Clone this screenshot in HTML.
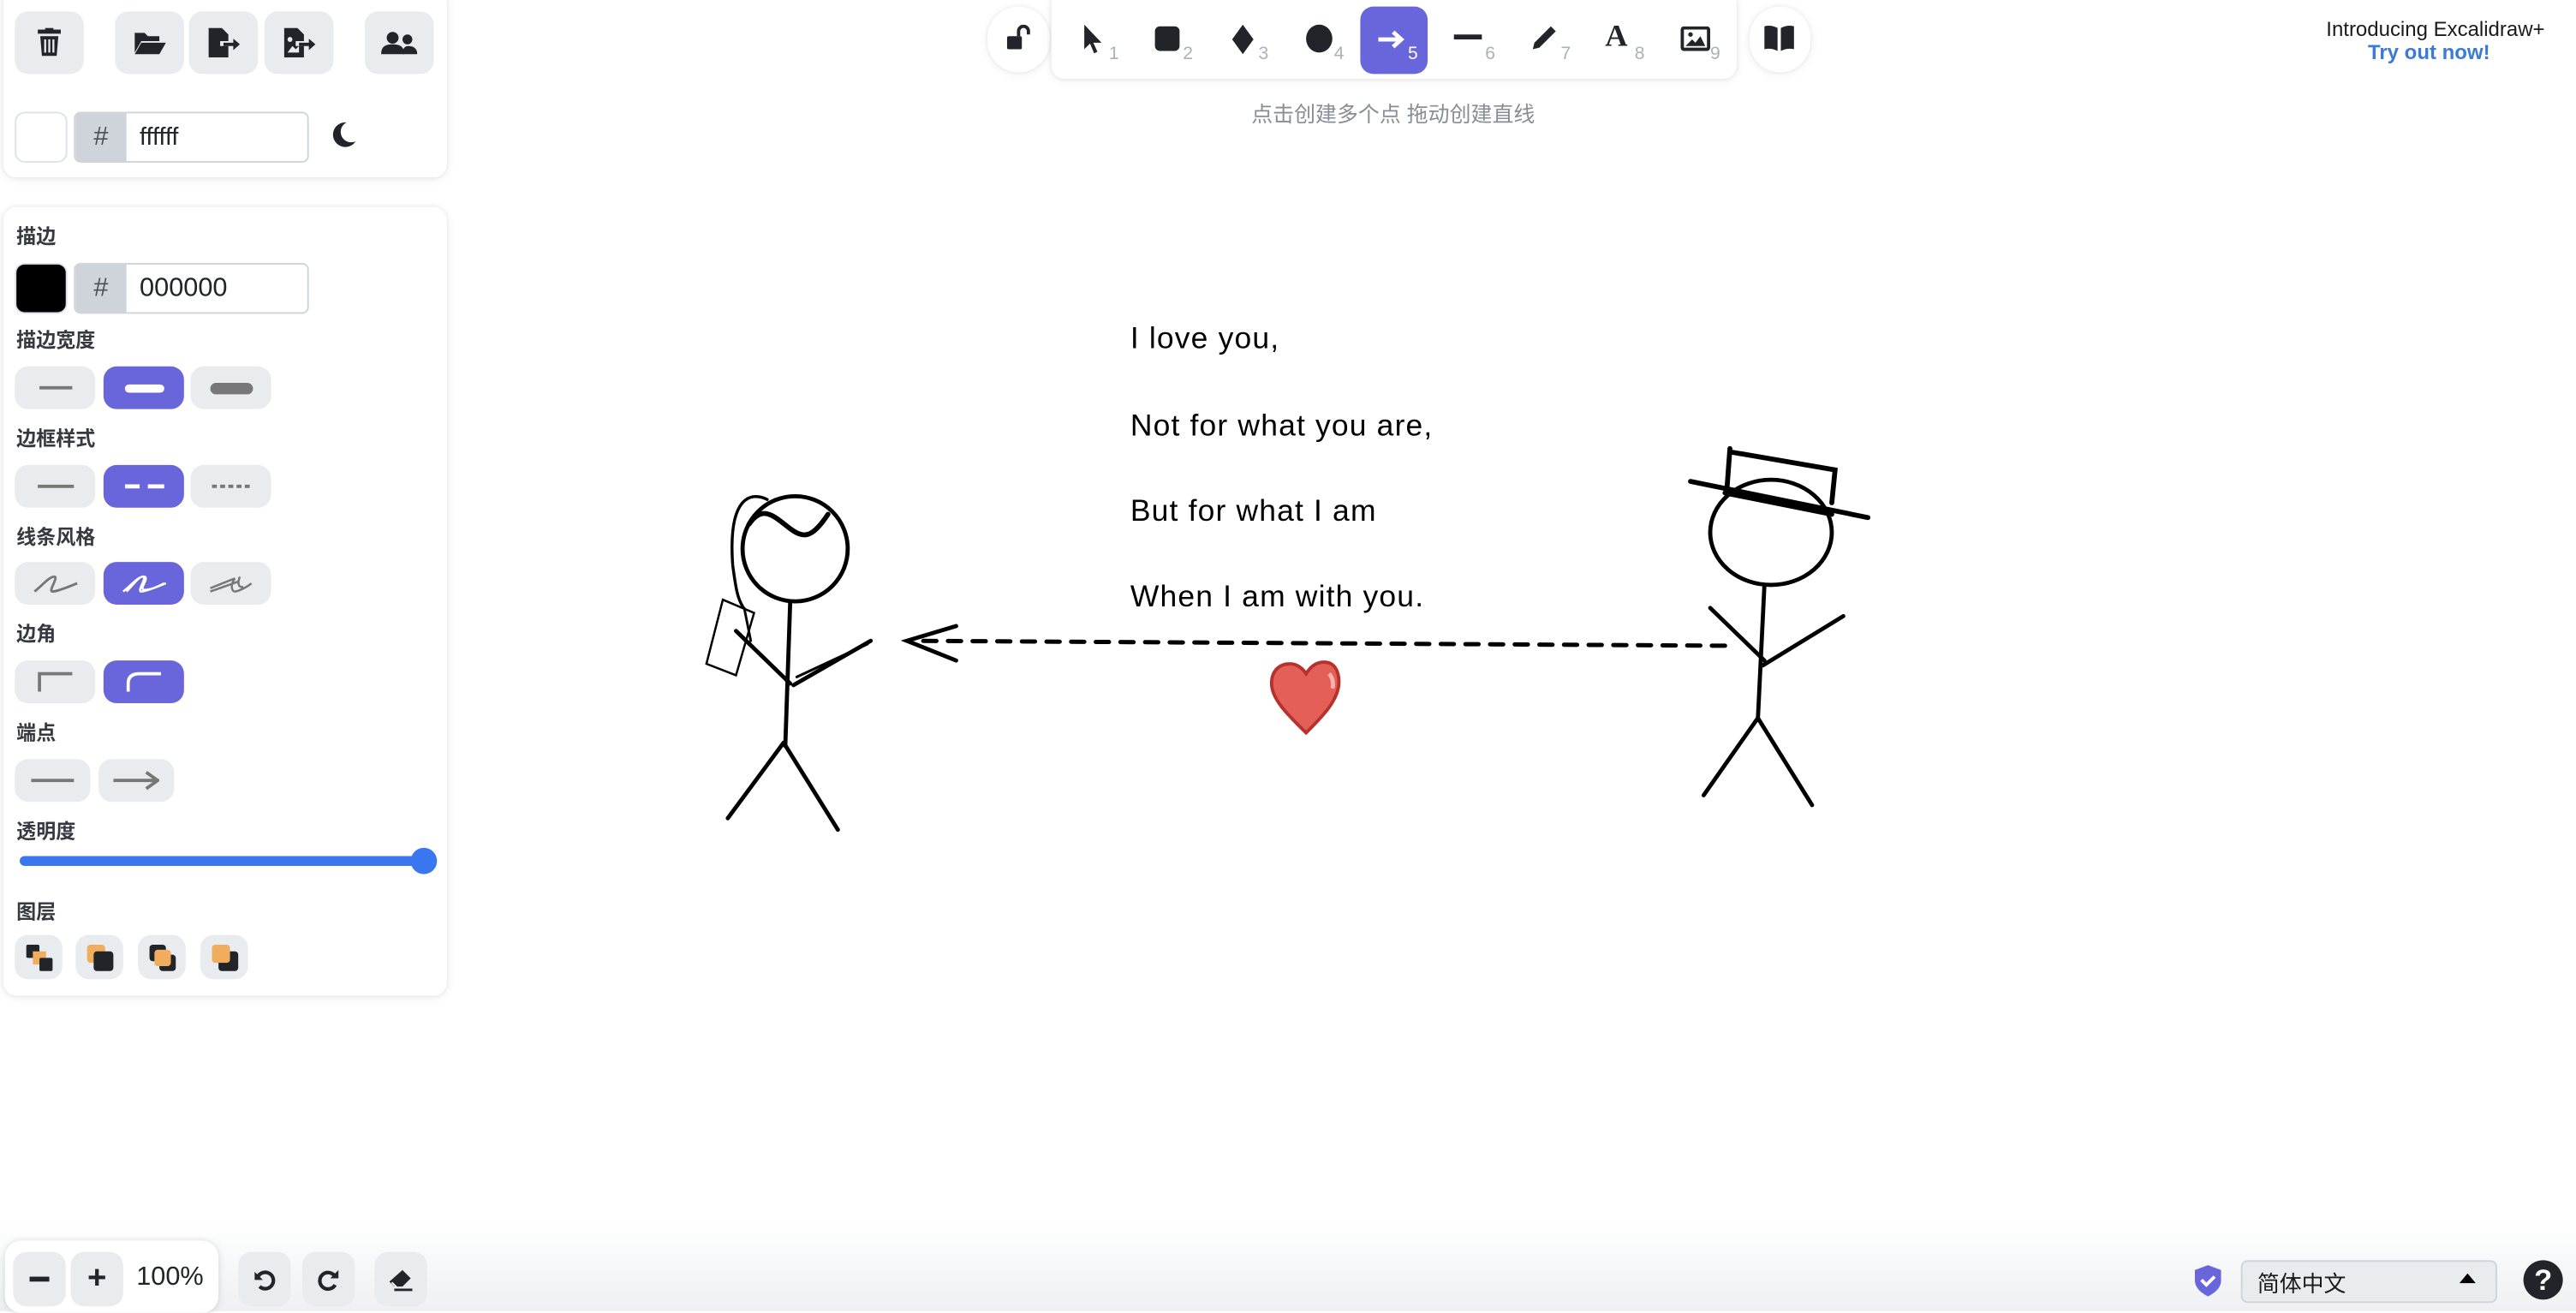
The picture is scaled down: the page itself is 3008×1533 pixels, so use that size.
<!DOCTYPE html>
<html><head><meta charset="utf-8"><style>
html,body{margin:0;padding:0;background:#fff;width:3008px;height:1530px;overflow:hidden}
#w{position:absolute;left:0;top:0;width:1568px;height:798px;transform:scale(1.918367);transform-origin:0 0;font-family:"Liberation Sans","Noto Sans CJK SC",sans-serif;color:#1b1b1f}
.a{position:absolute}
.panel{position:absolute;background:#fff;border-radius:8px;box-shadow:0 0 3px rgba(0,0,0,.08),0 1px 6px rgba(0,0,0,.07)}
.btn{position:absolute;background:#e9ecef;border-radius:8px;display:flex;align-items:center;justify-content:center}
.sel{background:#6965db}
.lbl{position:absolute;left:10px;font-size:12px;font-weight:bold;color:#343a40}
.num{position:absolute;font-size:11px;color:#aab1b9}
.hw{position:absolute;left:688px;font-family:"Liberation Sans",sans-serif;font-size:18.5px;letter-spacing:0.6px;color:#000}
</style></head><body><div id="w">

<div class="panel" style="left:2px;top:-8px;width:270px;height:116px"></div>
<div class="btn" style="left:9px;top:7px;width:42px;height:38px"><svg width="16" height="18" viewBox="0 0 16 18"><rect x="1" y="1" width="14" height="2.5" fill="#212529"/><rect x="5.5" y="0" width="5" height="2" fill="#212529"/><path d="M2.5 5h11l-1 12h-9z" fill="#212529"/><path d="M5.5 7v8M8 7v8M10.5 7v8" stroke="#e9ecef" stroke-width="1.2"/></svg></div>
<div class="btn" style="left:70px;top:7px;width:42px;height:38px"><svg width="20" height="16" viewBox="0 0 20 16"><path d="M1 2h6l2 2h7v3H5L1 14z" fill="#212529"/><path d="M5 8h15l-4 7H1z" fill="#212529"/></svg></div>
<div class="btn" style="left:115px;top:7px;width:42px;height:38px"><svg width="20" height="18" viewBox="0 0 20 18"><path d="M1 0h8l4 4v4H8v3h5v7H1z" fill="#212529"/><path d="M10 9h6V6.5l4 3.5-4 3.5V11h-6z" fill="#212529"/></svg></div>
<div class="btn" style="left:161px;top:7px;width:42px;height:38px"><svg width="20" height="18" viewBox="0 0 20 18"><path d="M1 0h8l4 4v4H8v3h5v7H1z" fill="#212529"/><circle cx="4.5" cy="7" r="1.5" fill="#e9ecef"/><path d="M3 15l3-4 2 2 2-2v4z" fill="#e9ecef"/><path d="M10 9h6V6.5l4 3.5-4 3.5V11h-6z" fill="#212529"/></svg></div>
<div class="btn" style="left:222px;top:7px;width:42px;height:38px"><svg width="22" height="15" viewBox="0 0 22 15"><circle cx="7" cy="4" r="3.6" fill="#212529"/><circle cx="16" cy="5" r="3" fill="#212529"/><path d="M0 14c0-5 3-6 7-6s7 1 7 6z" fill="#212529"/><path d="M13 14c0-3 1-5 3.5-5s5.5 1 5.5 5z" fill="#212529"/></svg></div>
<div class="a" style="left:9px;top:68px;width:30px;height:29px;border:1px solid #dee2e6;border-radius:6px;background:#fff"></div>
<div class="a" style="left:45px;top:68px;width:141px;height:29px;border:1px solid #ced4da;border-radius:4px;background:#fff;overflow:hidden"><div style="position:absolute;left:0;top:0;width:31px;height:29px;background:#ced4da;text-align:center;line-height:29px;font-size:16px;color:#495057">#</div><div style="position:absolute;left:39px;top:0;line-height:29px;font-size:15px;color:#212529">ffffff</div></div>
<svg class="a" style="left:200px;top:73px" width="18" height="18" viewBox="0 0 18 18"><path d="M11 1.5A7.5 7.5 0 1 0 16.5 13 6 6 0 0 1 11 1.5z" fill="#212529"/></svg>

<div class="panel" style="left:2px;top:126px;width:270px;height:480px"></div>
<div class="lbl" style="top:135px">描边</div>
<div class="a" style="left:9px;top:160px;width:30px;height:29px;border:1px solid #dee2e6;border-radius:6px;background:#000"></div>
<div class="a" style="left:45px;top:160px;width:141px;height:29px;border:1px solid #ced4da;border-radius:4px;background:#fff;overflow:hidden"><div style="position:absolute;left:0;top:0;width:31px;height:29px;background:#ced4da;text-align:center;line-height:29px;font-size:16px;color:#495057">#</div><div style="position:absolute;left:39px;top:0;line-height:29px;font-size:16px;color:#212529">000000</div></div>

<div class="lbl" style="top:198px">描边宽度</div>
<div class="btn" style="left:9px;top:223px;width:49px;height:26px"><div style="width:20px;height:1.5px;background:#777"></div></div>
<div class="btn sel" style="left:63px;top:223px;width:49px;height:26px"><div style="width:24px;height:5px;border-radius:3px;background:#fff"></div></div>
<div class="btn" style="left:116px;top:223px;width:49px;height:26px"><div style="width:26px;height:7px;border-radius:4px;background:#777"></div></div>

<div class="lbl" style="top:258px">边框样式</div>
<div class="btn" style="left:9px;top:283px;width:49px;height:26px"><div style="width:22px;height:1.5px;background:#777"></div></div>
<div class="btn sel" style="left:63px;top:283px;width:49px;height:26px"><svg width="24" height="4"><path d="M0 2h9M14 2h10" stroke="#fff" stroke-width="2.5"/></svg></div>
<div class="btn" style="left:116px;top:283px;width:49px;height:26px"><svg width="24" height="4"><path d="M0 2h24" stroke="#777" stroke-width="2" stroke-dasharray="3 2"/></svg></div>

<div class="lbl" style="top:318px">线条风格</div>
<div class="btn" style="left:9px;top:342px;width:49px;height:26px"><svg width="28" height="14" viewBox="0 0 28 14"><path d="M1 12C6 8 10 3 13 3S9 12 12 12s10-3 15-5" stroke="#777" stroke-width="1.5" fill="none"/></svg></div>
<div class="btn sel" style="left:63px;top:342px;width:49px;height:26px"><svg width="28" height="14" viewBox="0 0 28 14"><path d="M1 12C6 8 10 3 13 3S9 12 12 12s10-3 15-5M3 12C8 7 11 2 14 3s-4 8 0 8 8-2 12-4" stroke="#fff" stroke-width="1.3" fill="none"/></svg></div>
<div class="btn" style="left:116px;top:342px;width:49px;height:26px"><svg width="28" height="14" viewBox="0 0 28 14"><path d="M1 10L16 4M1 12L18 6M16 4c-3 4-2 8 0 8s8-3 10-5M19 3c-2 5 0 7 2 6" stroke="#777" stroke-width="1.3" fill="none"/></svg></div>

<div class="lbl" style="top:377px">边角</div>
<div class="btn" style="left:9px;top:402px;width:49px;height:26px"><svg width="22" height="12"><path d="M1 12V1h20" stroke="#777" stroke-width="2" fill="none"/></svg></div>
<div class="btn sel" style="left:63px;top:402px;width:49px;height:26px"><svg width="22" height="12"><path d="M1 12V7Q1 1 8 1h13" stroke="#fff" stroke-width="2" fill="none"/></svg></div>

<div class="lbl" style="top:437px">端点</div>
<div class="btn" style="left:9px;top:462px;width:46px;height:26px"><div style="width:26px;height:2px;background:#777"></div></div>
<div class="btn" style="left:60px;top:462px;width:46px;height:26px"><svg width="28" height="12"><path d="M0 6h27M20 1l7 5-7 5" stroke="#777" stroke-width="2" fill="none"/></svg></div>

<div class="lbl" style="top:497px">透明度</div>
<div class="a" style="left:12px;top:521px;width:250px;height:6px;border-radius:3px;background:#3a76f0"></div>
<div class="a" style="left:250px;top:516px;width:16px;height:16px;border-radius:8px;background:#3a76f0"></div>

<div class="lbl" style="top:546px">图层</div>
<div class="btn" style="left:9px;top:569px;width:29px;height:27px"><svg width="18" height="18"><rect x="1" y="1" width="8" height="8" rx="1" fill="#212529"/><rect x="5" y="5" width="8" height="8" fill="#f0ad5e"/><rect x="9" y="9" width="8" height="8" rx="1" fill="#212529"/></svg></div>
<div class="btn" style="left:46px;top:569px;width:29px;height:27px"><svg width="18" height="18"><rect x="1" y="1" width="11" height="11" rx="2" fill="#f0ad5e"/><rect x="5" y="5" width="12" height="12" rx="2" fill="#212529"/></svg></div>
<div class="btn" style="left:84px;top:569px;width:29px;height:27px"><svg width="18" height="18"><rect x="1" y="1" width="10" height="10" rx="2" fill="#212529"/><rect x="7" y="7" width="10" height="10" rx="2" fill="#212529"/><rect x="4" y="4" width="10" height="10" rx="2" fill="#f0ad5e"/></svg></div>
<div class="btn" style="left:122px;top:569px;width:29px;height:27px"><svg width="18" height="18"><rect x="5" y="5" width="12" height="12" rx="2" fill="#212529"/><rect x="1" y="1" width="11" height="11" rx="2" fill="#f0ad5e"/></svg></div>

<div class="panel" style="left:601px;top:4px;width:38px;height:40px;border-radius:20px"></div>
<svg class="a" style="left:612px;top:15px" width="16" height="16" viewBox="0 0 16 16"><rect x="1" y="7" width="9" height="8" rx="1" fill="#212529"/><path d="M8 7V4a3 3 0 0 1 6 0v2" stroke="#212529" stroke-width="2" fill="none"/></svg>
<div class="panel" style="left:640px;top:-6px;width:417px;height:54px"></div>
<div class="panel" style="left:1065px;top:4px;width:37px;height:40px;border-radius:20px"></div>
<svg class="a" style="left:1073px;top:15px" width="20" height="16" viewBox="0 0 20 16"><path d="M1 1q4-1 8 1v14q-4-2-8-1zM11 2q4-2 8-1v14q-4-1-8 1z" fill="#212529"/></svg>

<svg class="a" style="left:658px;top:14px" width="14" height="20" viewBox="0 0 14 20"><path d="M2 1v15l3.5-3.5 2.5 6 2-1-2.5-5.5h5z" fill="#212529"/></svg><span class="num" style="left:675px;top:27px">1</span>
<div class="a" style="left:703px;top:16px;width:15px;height:15px;border-radius:3px;background:#212529"></div><span class="num" style="left:720px;top:27px">2</span>
<svg class="a" style="left:749px;top:14px" width="15" height="20"><path d="M7.5 1L14 10 7.5 19 1 10z" fill="#212529"/></svg><span class="num" style="left:766px;top:27px">3</span>
<div class="a" style="left:795px;top:15px;width:16px;height:17px;border-radius:50%;background:#212529"></div><span class="num" style="left:812px;top:27px">4</span>
<div class="a" style="left:828px;top:4px;width:41px;height:41px;border-radius:8px;background:#6965db"></div>
<svg class="a" style="left:838px;top:18px" width="20" height="12"><path d="M1 6h12M10 1.5l5 4.5-5 4.5" stroke="#fff" stroke-width="2.5" fill="none"/></svg><span class="num" style="left:857px;top:27px;color:#fff">5</span>
<div class="a" style="left:885px;top:21px;width:17px;height:3px;background:#212529"></div><span class="num" style="left:904px;top:27px">6</span>
<svg class="a" style="left:931px;top:14px" width="18" height="18"><path d="M2 16l1-4L13 2l3 3L6 15z" fill="#212529"/></svg><span class="num" style="left:950px;top:27px">7</span>
<div class="a" style="left:977px;top:12px;font-size:19px;font-weight:bold;font-family:'Liberation Serif',serif;color:#212529">A</div><span class="num" style="left:995px;top:27px">8</span>
<svg class="a" style="left:1023px;top:16px" width="18" height="15"><rect x="1" y="1" width="16" height="13" rx="1" fill="none" stroke="#212529" stroke-width="2"/><circle cx="6" cy="5" r="1.4" fill="#212529"/><path d="M3 12l4-4 2 2 3-4 3 6z" fill="#212529"/></svg><span class="num" style="left:1041px;top:27px">9</span>

<div class="a" style="left:700px;top:59px;width:296px;text-align:center;font-size:13px;color:#868e96">点击创建多个点 拖动创建直线</div>

<div class="a" style="right:19px;top:11px;text-align:right;font-size:12.5px;color:#1b1b1f">Introducing Excalidraw+</div>
<div class="a" style="left:1440px;top:25px;width:77px;text-align:center;font-size:12.5px;color:#3a7bd5;font-weight:bold">Try out now!</div>

<div class="hw" style="top:195px">I love you,</div>
<div class="hw" style="top:248px">Not for what you are,</div>
<div class="hw" style="top:300px">But for what I am</div>
<div class="hw" style="top:352px">When I am with you.</div>

<svg class="a" style="left:0;top:0" width="1568" height="798" viewBox="0 0 1568 798">
<g stroke="#000" stroke-width="2.5" fill="none" stroke-linecap="round">
 <circle cx="484" cy="334" r="32"/>
 <path d="M456 319c8-12 15-5 24 2s14 7 24-8" stroke-width="3"/>
 <path d="M467 304c-10-5-24-2-21 40 2 15 3 20 6 25" stroke-width="1.8"/>
 <path d="M453 370l4 20" stroke-width="1.5"/>
 <path d="M440 365l19 8-11 38-18-7z" stroke-width="1.3"/>
 <path d="M481 366l-3 88"/>
 <path d="M448 384l33 32M530 390l-47 27" />
 <path d="M485 412l43-20" stroke-width="1.6"/>
 <path d="M477 452l-34 46M477 452l33 53"/>
 <ellipse cx="1078" cy="324" rx="37" ry="32"/>
 <path d="M1029 293l108 22" stroke-width="3"/>
 <path d="M1053 275l64 11-2 20M1053 273l-2 27M1050 300l65 13" stroke-width="3"/>
 <path d="M1074 356l-4 82"/>
 <path d="M1041 370l33 32M1122 375l-49 30"/>
 <path d="M1070 437l-33 47M1070 437l33 53"/>
 <path d="M1050 393L556 390" stroke-dasharray="8 7" stroke-width="2.6"/>
 <path d="M582 381l-30 9 30 12" stroke-width="2.5"/>
</g>
<path d="M795 446c-10-10-21-20-21-30 0-8 5-12 11-12 5 0 8 3 10 6 2-3 5-7 11-7 6 0 9 5 9 12 0 11-10 21-20 31z" fill="#e35f57" stroke="#b8322d" stroke-width="2"/>
<path d="M809 410c2 2 3 6 2 9" stroke="#f5b3ae" stroke-width="2.5" fill="none"/>
</svg>

<div class="a" style="left:0;top:742px;width:1568px;height:56px;background:linear-gradient(#fff,#eef0f2)"></div>
<div class="panel" style="left:3px;top:755px;width:130px;height:44px;border-radius:10px"></div>
<div class="btn" style="left:8px;top:762px;width:32px;height:33px"><div style="width:12px;height:2.5px;background:#212529"></div></div>
<div class="btn" style="left:43px;top:762px;width:32px;height:33px;font-size:20px;font-weight:bold;color:#212529">+</div>
<div class="a" style="left:83px;top:769px;font-size:16px;color:#212529">100%</div>
<div class="btn" style="left:145px;top:762px;width:32px;height:33px"><svg width="14" height="14" viewBox="0 0 14 14"><path d="M3 5a5 5 0 1 1 1 6" stroke="#212529" stroke-width="2.2" fill="none"/><path d="M1 2v5h5z" fill="#212529"/></svg></div>
<div class="btn" style="left:184px;top:762px;width:32px;height:33px"><svg width="14" height="14" viewBox="0 0 14 14"><path d="M11 5a5 5 0 1 0 0 5" stroke="#212529" stroke-width="2.2" fill="none"/><path d="M13 1v5H8z" fill="#212529"/></svg></div>
<div class="btn" style="left:228px;top:762px;width:32px;height:33px"><svg width="16" height="14" viewBox="0 0 16 14"><path d="M9 1l5 5-5 5H4L1 8z" fill="#212529"/><path d="M3 8l3 3M4 13h11" stroke="#212529" stroke-width="1.5"/><path d="M2.5 8.5l3 3" stroke="#fff" stroke-width="1"/></svg></div>

<svg class="a" style="left:1336px;top:770px" width="16" height="19" viewBox="0 0 16 19"><path d="M8 0l8 3v6c0 5-4 8-8 10-4-2-8-5-8-10V3z" fill="#6965db"/><path d="M4 9l3 3 5-5" stroke="#fff" stroke-width="2" fill="none"/></svg>
<div class="a" style="left:1364px;top:767px;width:154px;height:24px;border:1px solid #ced4da;border-radius:4px;background:#e9ecef"></div>
<div class="a" style="left:1374px;top:770px;font-size:13.5px;color:#1b1b1f">简体中文</div>
<svg class="a" style="left:1497px;top:775px" width="10" height="6"><path d="M0 6L5 0l5 6z" fill="#000"/></svg>
<div class="a" style="left:1536px;top:767px;width:24px;height:24px;border-radius:12px;background:#212529;color:#fff;font-weight:bold;font-size:18px;text-align:center;line-height:24px">?</div>

</div></body></html>
